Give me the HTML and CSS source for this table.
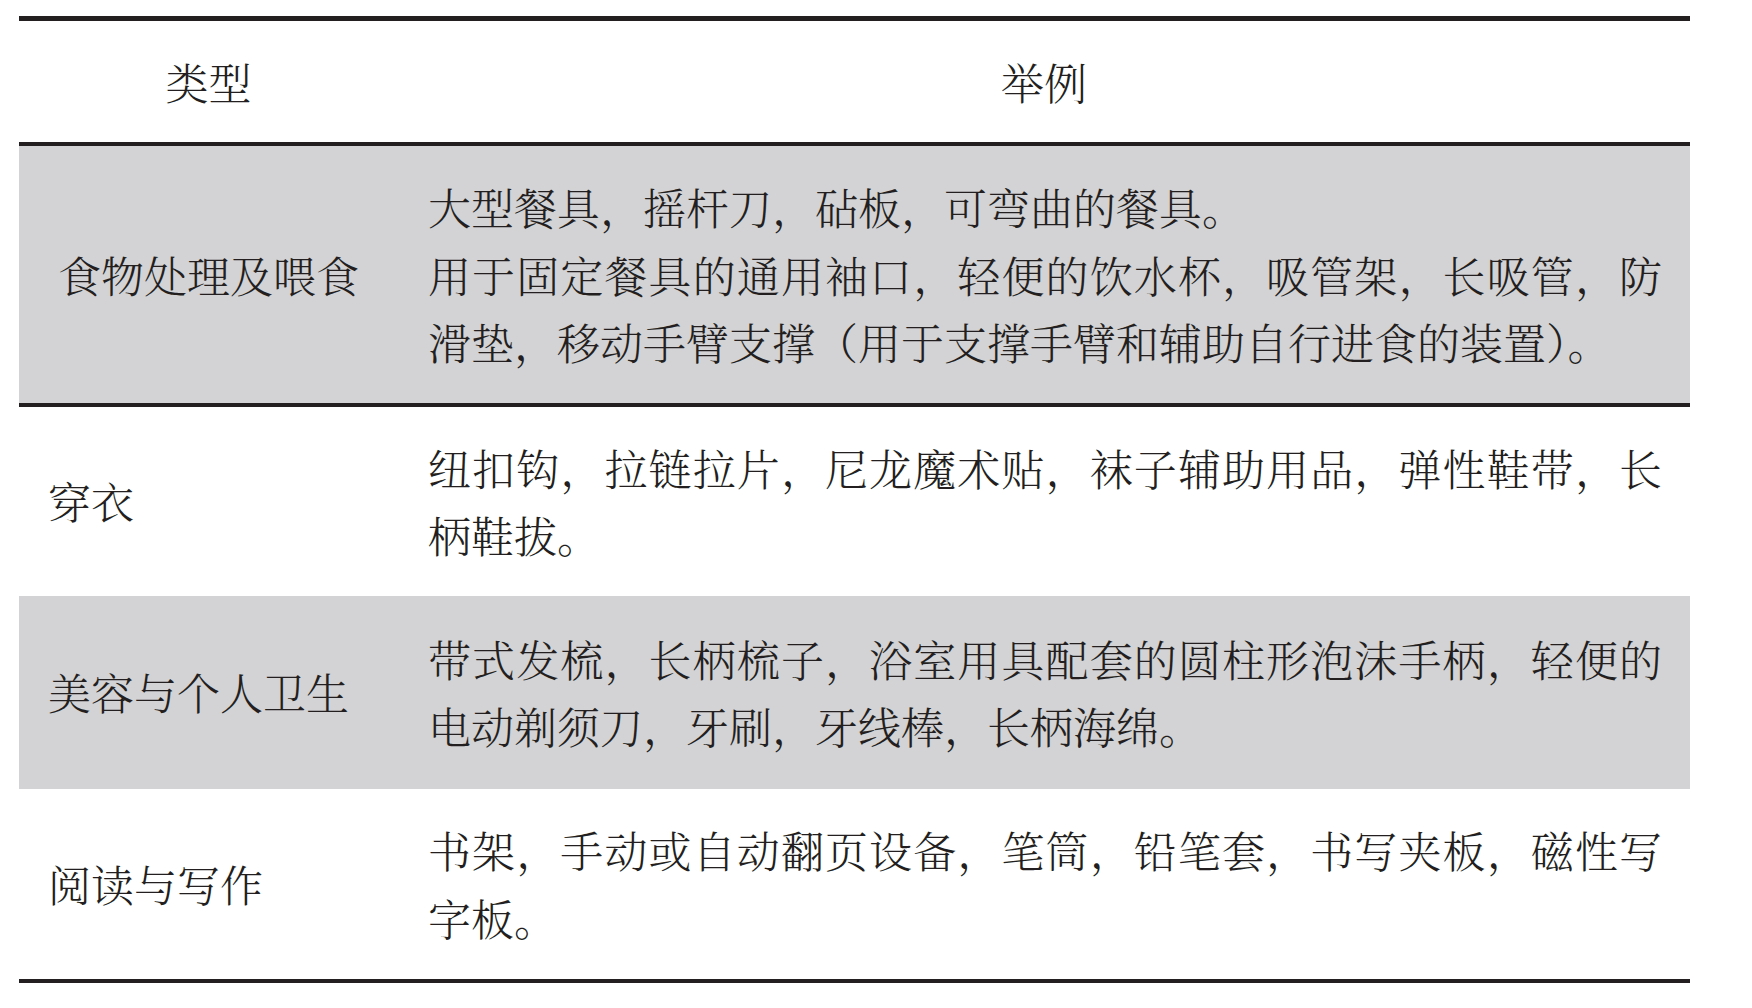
FILE: index.html
```html
<!DOCTYPE html>
<html lang="zh-CN">
<head>
<meta charset="utf-8">
<title>类型与举例</title>
<link rel="stylesheet" href="styles.css">
</head>
<body>
<table class="aids">
  <thead>
    <tr class="head-row">
      <th class="col-type">类型</th>
      <th class="col-ex">举例</th>
    </tr>
  </thead>
  <tbody>
    <tr class="row row-shaded row-first">
      <td class="type type-center">食物处理及喂食</td>
      <td class="ex">大型餐具，摇杆刀，砧板，可弯曲的餐具。<br>用于固定餐具的通用袖口，轻便的饮水杯，吸管架，长吸管，防滑垫，移动手臂支撑（用于支撑手臂和辅助自行进食的装置）。</td>
    </tr>
    <tr class="row row-plain row-second">
      <td class="type">穿衣</td>
      <td class="ex">纽扣钩，拉链拉片，尼龙魔术贴，袜子辅助用品，弹性鞋带，长柄鞋拔。</td>
    </tr>
    <tr class="row row-shaded row-third">
      <td class="type">美容与个人卫生</td>
      <td class="ex">带式发梳，长柄梳子，浴室用具配套的圆柱形泡沫手柄，轻便的电动剃须刀，牙刷，牙线棒，长柄海绵。</td>
    </tr>
    <tr class="row row-plain row-last">
      <td class="type">阅读与写作</td>
      <td class="ex">书架，手动或自动翻页设备，笔筒，铅笔套，书写夹板，磁性写字板。</td>
    </tr>
  </tbody>
</table>
</body>
</html>
```

FILE: styles.css
```css
html, body {
  margin: 0;
  padding: 0;
  background: #ffffff;
}

body {
  padding: 16px 0 0 19px;
  font-family: "Noto Serif CJK SC", "Noto Sans CJK SC", "Liberation Serif", serif;
  color: #231f20;
}

.aids {
  width: 1671px;
  border-collapse: collapse;
  table-layout: fixed;
  font-size: 43px;
  line-height: 67.5px;
  font-weight: 300;
}

.col-type {
  width: 379px;
}

.aids th {
  font-weight: 300;
  text-align: center;
  padding: 27px 0 26.5px 0;
}

.head-row {
  border-top: 5px solid #231f20;
  border-bottom: 4px solid #231f20;
}

.aids td {
  vertical-align: middle;
  padding: 27px 0;
}

.row-shaded {
  background: #d3d2d4;
}

.row-first {
  border-bottom: 4px solid #231f20;
}

.row-third td {
  padding-top: 29px;
  padding-bottom: 29px;
}

.row-last td {
  padding-top: 27.5px;
  padding-bottom: 27.5px;
}

.row-last {
  border-bottom: 4px solid #231f20;
}

.type {
  text-align: left;
  padding-left: 29px !important;
}

.type-center {
  text-align: center;
  padding-left: 0 !important;
}

.ex {
  text-align: justify;
  padding-left: 30px !important;
  padding-right: 28px !important;
}
```
